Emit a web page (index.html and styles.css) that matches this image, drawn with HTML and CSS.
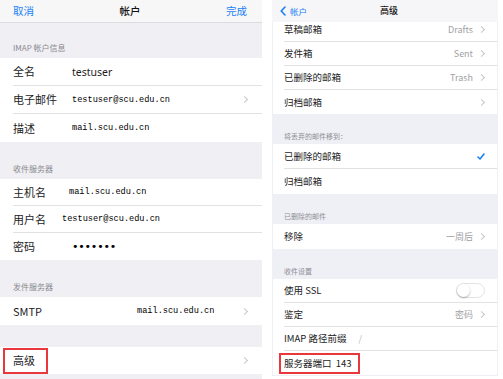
FILE: index.html
```html
<!DOCTYPE html>
<html lang="zh-CN">

<head>
    <meta charset="UTF-8">
    <meta name="viewport" content="width=device-width, initial-scale=1.0">
    <title>帐户 - 高级</title>
    <link rel="stylesheet" href="styles.css">
</head>

<body>

    <div class="screens">

        <!-- 左边：帐户 -->
        <section class="panel panel-account">
            <header class="nav">
                <span class="nav-btn">取消</span>
                <span class="nav-title">帐户</span>
                <span class="nav-btn">完成</span>
            </header>

            <div class="group-head head-first">IMAP 帐户信息</div>
            <div class="group">
                <div class="row"><span class="label">全名</span><span class="value value-sans">testuser</span></div>
                <div class="row"><span class="label">电子邮件</span><span class="value">testuser@scu.edu.cn</span><span class="chevron"></span></div>
                <div class="row"><span class="label">描述</span><span class="value">mail.scu.edu.cn</span></div>
            </div>

            <div class="group-head">收件服务器</div>
            <div class="group group-compact">
                <div class="row"><span class="label">主机名</span><span class="value shift-3">mail.scu.edu.cn</span></div>
                <div class="row"><span class="label">用户名</span><span class="value shift-10">testuser@scu.edu.cn</span></div>
                <div class="row"><span class="label">密码</span><span class="value value-dots">•••••••</span></div>
            </div>

            <div class="group-head head-smtp">发件服务器</div>
            <div class="group">
                <div class="row"><span class="label">SMTP</span><span class="value value-right">mail.scu.edu.cn</span><span class="chevron"></span></div>
            </div>

            <div class="spacer"></div>
            <div class="group">
                <div class="row row-last"><span class="label marked">高级</span><span class="chevron chevron-push"></span></div>
            </div>
        </section>

        <!-- 右边：高级 -->
        <section class="panel panel-advanced">
            <header class="nav nav-small">
                <span class="back">
                    <svg width="6" height="10" viewBox="0 0 6 10"><polyline points="5,1 1.2,5 5,9" fill="none" stroke="#1a7ff5" stroke-width="1.6" stroke-linecap="round" stroke-linejoin="round"/></svg>
                    帐户
                </span>
                <span class="nav-title nav-title-small">高级</span>
                <span class="back back-ghost">帐户</span>
            </header>

            <div class="scroll">
                <div class="group group-up">
                    <div class="row"><span class="label">草稿邮箱</span><span class="detail">Drafts</span><span class="chevron"></span></div>
                    <div class="row"><span class="label">发件箱</span><span class="detail">Sent</span><span class="chevron"></span></div>
                    <div class="row"><span class="label">已删除的邮箱</span><span class="detail">Trash</span><span class="chevron"></span></div>
                    <div class="row"><span class="label">归档邮箱</span><span class="chevron chevron-push"></span></div>
                </div>

                <div class="group-head">将丢弃的邮件移到：</div>
                <div class="group group-wide">
                    <div class="row"><span class="label">已删除的邮箱</span>
                        <svg class="check" width="8" height="7" viewBox="0 0 8 7"><polyline points="1,4 3,6 7,1" fill="none" stroke="#1a7ff5" stroke-width="1.6" stroke-linecap="round" stroke-linejoin="round"/></svg>
                    </div>
                    <div class="row"><span class="label">归档邮箱</span></div>
                </div>

                <div class="group-head">已删除的邮件</div>
                <div class="group group-wide">
                    <div class="row"><span class="label">移除</span><span class="detail">一周后</span><span class="chevron"></span></div>
                </div>

                <div class="group-head">收件设置</div>
                <div class="group">
                    <div class="row"><span class="label">使用 SSL</span><span class="toggle"></span></div>
                    <div class="row"><span class="label">鉴定</span><span class="detail">密码</span><span class="chevron"></span></div>
                    <div class="row"><span class="label">IMAP 路径前缀</span><span class="prefix">/</span></div>
                    <div class="row"><span class="label marked">服务器端口&nbsp;&nbsp;143</span></div>
                </div>
            </div>
        </section>

    </div>

</body>

</html>
```

FILE: styles.css
```css
body {
    margin: 0;
    background: #fff;
    font-family: "Noto Sans CJK SC", "Noto Sans", sans-serif;
    color: #1c1c1e;
}

.screens {
    display: flex;
    gap: 10px;
    height: 379px;
}

.panel {
    background: #efeff4;
    overflow: hidden;
}

.panel-account {
    width: 262px;
    height: 379px;
}

.panel-advanced {
    width: 226px;
    height: 376px;
    background: #eff0f6;
}

/* 导航栏 */
.nav {
    height: 23px;
    box-sizing: border-box;
    padding: 0 15px 0 13px;
    background: #f7f7f7;
    border-bottom: 1px solid #dcdcdf;
    display: flex;
    align-items: center;
    justify-content: space-between;
}

.nav-btn {
    font-size: 10.5px;
    line-height: 14px;
    color: #1a7ff5;
}

.nav-title {
    font-size: 10.5px;
    line-height: 14px;
    font-weight: 500;
    color: #111;
}

.nav-small {
    height: 22px;
    padding: 0 10px 0 8px;
    border-bottom: none;
    background: #f6f6f8;
}

.nav-title-small {
    font-size: 9px;
}

.back {
    display: flex;
    align-items: center;
    gap: 4px;
    font-size: 8.5px;
    line-height: 12px;
    color: #1a7ff5;
}

.back-ghost {
    visibility: hidden;
}

/* 分组 */
.group-head {
    height: 37px;
    box-sizing: border-box;
    padding: 0 0 5px 13px;
    display: flex;
    align-items: flex-end;
    font-size: 8px;
    line-height: 10px;
    color: #8a8a8f;
}

.head-first {
    height: 35px;
}

.head-smtp {
    height: 37px;
}

.spacer {
    height: 22px;
}

.group {
    background: #fff;
}

.row {
    height: 28px;
    box-sizing: border-box;
    margin-left: 13px;
    padding-right: 15px;
    border-bottom: 1px solid #e2e2e5;
    display: flex;
    align-items: center;
}

.row:last-child {
    border-bottom: none;
}

.group-compact .row {
    height: 27px;
}

.row-last {
    height: 27px;
}

.label {
    flex: 0 0 59px;
    font-size: 11px;
    line-height: 15px;
    white-space: nowrap;
}

.value {
    font-family: "Liberation Mono", "DejaVu Sans Mono", monospace;
    font-size: 8.6px;
    line-height: 12px;
    color: #000;
}

.value-sans {
    font-family: "Noto Sans", sans-serif;
    font-size: 10.5px;
    color: #1c1c1e;
}

.shift-3 {
    margin-left: -3px;
}

.shift-10 {
    margin-left: -10px;
}

.value-dots {
    font-family: "DejaVu Sans", sans-serif;
    font-size: 11px;
    letter-spacing: -0.2px;
}

.value-right {
    margin-left: 65px;
}

.chevron {
    margin-left: auto;
    width: 4px;
    height: 4px;
    border-top: 1px solid #c7c7cc;
    border-right: 1px solid #c7c7cc;
    transform: rotate(45deg);
}

.chevron-push {
    margin-left: auto;
}

/* 标注框 */
.marked {
    position: relative;
    flex: 0 0 auto;
}

.marked::after {
    content: "";
    position: absolute;
    left: -10px;
    right: -13px;
    top: -5px;
    bottom: -6px;
    border: 2px solid #e8383d;
}

/* 右边面板 */
.scroll {
    height: 354px;
    overflow: hidden;
    margin: 0 1px;
}

.panel-advanced .group-head {
    height: 30px;
    padding: 0 0 3px 11px;
    font-size: 7px;
    line-height: 9px;
    color: #8e8e93;
}

.group-up {
    margin-top: -4px;
}

.panel-advanced .row {
    height: 24px;
    margin-left: 11px;
    padding-right: 13px;
}

.panel-advanced .group-wide .row {
    height: 25px;
}

.panel-advanced .label {
    flex: 0 0 auto;
    font-size: 9.5px;
    line-height: 13px;
}

.detail {
    margin-left: auto;
    margin-right: 6px;
    font-size: 9px;
    line-height: 12px;
    color: #a1a1a6;
}

.detail + .chevron {
    margin-left: 0;
}

.check {
    margin-left: auto;
    margin-right: -1px;
}

.toggle {
    margin-left: auto;
    margin-right: -1px;
    width: 29px;
    height: 15px;
    box-sizing: border-box;
    border: 1px solid #e3e3e6;
    border-radius: 8px;
    position: relative;
}

.toggle::after {
    content: "";
    position: absolute;
    left: 0;
    top: 0;
    width: 13px;
    height: 13px;
    border-radius: 50%;
    background: #fff;
    box-shadow: 0 1px 2px rgba(0, 0, 0, 0.3);
}

.prefix {
    margin-left: 12px;
    font-size: 9px;
    color: #b5b5ba;
}

.panel-advanced .marked::after {
    left: -5px;
    right: -8px;
    top: -4px;
    bottom: -4px;
}
```
